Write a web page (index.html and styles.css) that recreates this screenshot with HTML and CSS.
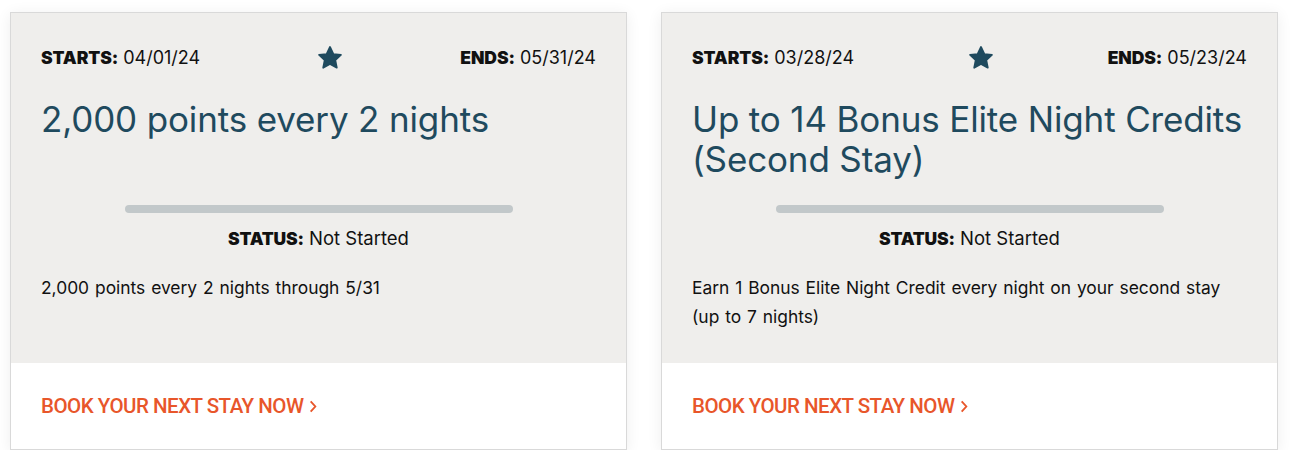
FILE: index.html
```html
<!DOCTYPE html>
<html>
<head>
<meta charset="utf-8">
<link rel="stylesheet" href="styles.css">
</head>
<body>
<div class="grid">
  <div class="card">
    <div class="body">
      <div class="dates">
        <span class="date"><b>STARTS:</b> 04/01/24</span>
        <svg class="star" viewBox="0 0 24 24" width="26" height="26"><path d="M12 1.8l3.05 6.5 7.05.85-5.2 4.85 1.38 7-6.28-3.5-6.28 3.5 1.38-7-5.2-4.85 7.05-.85z" fill="#1f4a5e" stroke="#1f4a5e" stroke-width="1.6" stroke-linejoin="round"/></svg>
        <span class="date"><b>ENDS:</b> 05/31/24</span>
      </div>
      <h2 class="title">2,000 points every 2 nights</h2>
      <div class="bar"></div>
      <p class="status"><b>STATUS:</b> Not Started</p>
      <p class="desc">2,000 points every 2 nights through 5/31</p>
    </div>
    <div class="foot"><a class="cta" href="#">BOOK YOUR NEXT STAY NOW <svg class="chev" viewBox="0 0 8 14" width="8" height="13"><path d="M1.5 1.5L6.5 7l-5 5.5" fill="none" stroke="#e8562a" stroke-width="2"/></svg></a></div>
  </div>
  <div class="card">
    <div class="body">
      <div class="dates">
        <span class="date"><b>STARTS:</b> 03/28/24</span>
        <svg class="star" viewBox="0 0 24 24" width="26" height="26"><path d="M12 1.8l3.05 6.5 7.05.85-5.2 4.85 1.38 7-6.28-3.5-6.28 3.5 1.38-7-5.2-4.85 7.05-.85z" fill="#1f4a5e" stroke="#1f4a5e" stroke-width="1.6" stroke-linejoin="round"/></svg>
        <span class="date"><b>ENDS:</b> 05/23/24</span>
      </div>
      <h2 class="title">Up to 14 Bonus Elite Night Credits (Second Stay)</h2>
      <div class="bar"></div>
      <p class="status"><b>STATUS:</b> Not Started</p>
      <p class="desc">Earn 1 Bonus Elite Night Credit every night on your second stay (up to 7 nights)</p>
    </div>
    <div class="foot"><a class="cta" href="#">BOOK YOUR NEXT STAY NOW <svg class="chev" viewBox="0 0 8 14" width="8" height="13"><path d="M1.5 1.5L6.5 7l-5 5.5" fill="none" stroke="#e8562a" stroke-width="2"/></svg></a></div>
  </div>
</div>
</body>
</html>
```
FILE: styles.css
```css
* { box-sizing: border-box; }
html, body { margin: 0; background: #fff; }
body { padding: 12px 15px 0 10px; font-family: Inter, "Liberation Sans", sans-serif; color: #111; }
.grid { display: grid; grid-template-columns: 617px 617px; column-gap: 34px; }
.card {
  border: 1px solid #d9d9d9;
  background: #fff;
  box-shadow: 0 2px 14px rgba(0,0,0,0.07);
  display: flex; flex-direction: column;
}
.body {
  background: #efeeec;
  height: 350px;
  padding: 32px 30px 0 30px;
}
.dates { display: flex; justify-content: space-between; align-items: center; height: 24px; font-size: 18px; letter-spacing: 0; }
.date b { font-weight: 900; font-size: 17.5px; letter-spacing: -0.1px; }
.star { display: block; margin-top: 2px; }
.title {
  margin: 30px 0 0; font-weight: 400;
  font-size: 35px; line-height: 40px; color: #1f4a5e; height: 80px; letter-spacing: -0.15px;
}
.bar { width: 388px; height: 8px; border-radius: 4px; background: #c2c8ca; margin: 26px auto 0; }
.status { margin: 13px 0 0; text-align: center; font-size: 18.5px; line-height: 24px; letter-spacing: 0; }
.status b { font-weight: 900; font-size: 17.5px; letter-spacing: -0.2px; }
.desc { margin: 22px 0 0; font-size: 17.4px; line-height: 29px; letter-spacing: 0; word-spacing: 1px; }
.foot { height: 86px; display: flex; align-items: center; padding-left: 30px; }
.cta { font-family: Roboto, "Liberation Sans", sans-serif; color: #e8562a; text-decoration: none; font-weight: 500; font-size: 20.5px; letter-spacing: -0.5px; display: flex; align-items: center; gap: 6px; }
.chev { display: block; }
```
